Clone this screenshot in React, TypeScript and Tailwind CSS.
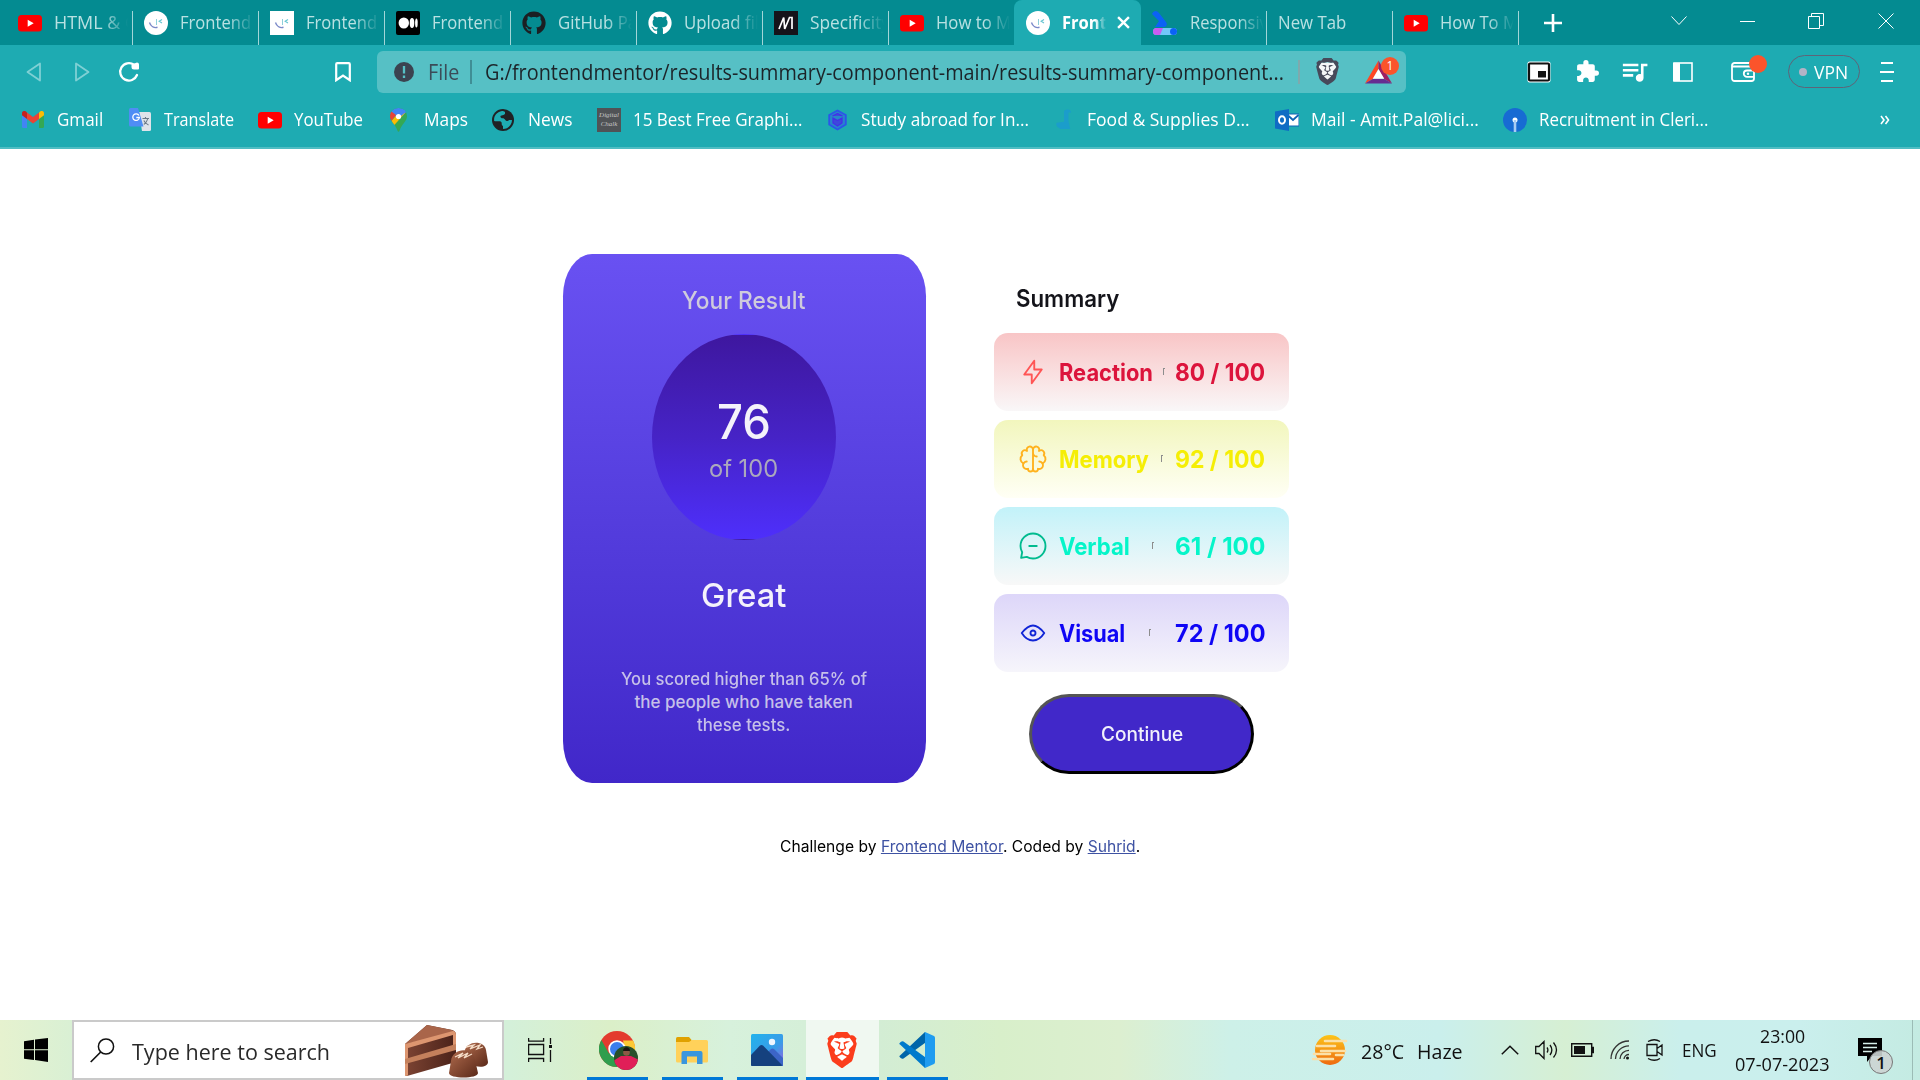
import { useLayoutEffect, useRef, useState, type ReactNode } from "react";
import { FaGithub } from "react-icons/fa";
import { MdExtension, MdQueueMusic } from "react-icons/md";
import { SiBrave } from "react-icons/si";

/* Single-line text condensed or widened to an exact width. */
function Fit({ w, className = "", children }: { w: number; className?: string; children: ReactNode }) {
  const ref = useRef<HTMLSpanElement>(null);
  const [scale, setScale] = useState(1);
  useLayoutEffect(() => {
    if (ref.current && ref.current.offsetWidth) setScale(w / ref.current.offsetWidth);
  }, [w]);
  return (
    <span className={"inline-block shrink-0 whitespace-nowrap " + className} style={{ width: w }}>
      <span ref={ref} className="inline-block origin-left whitespace-nowrap" style={{ transform: `scaleX(${scale})` }}>
        {children}
      </span>
    </span>
  );
}

const YouTube = () => (
  <svg width="24" height="24" viewBox="0 0 24 24" className="shrink-0">
    <rect x="0" y="4" width="24" height="16.5" rx="3.5" fill="#f00" />
    <path d="M9.7 8.8v7l6-3.5z" fill="#fff" />
  </svg>
);

const Mentor = ({ round = false }: { round?: boolean }) => (
  <svg width="24" height="24" viewBox="0 0 24 24" className="shrink-0">
    <rect width="24" height="24" rx={round ? 12 : 0} fill="#fff" />
    <path d="M5.500 11.500c1.200 3.800 4.400 5.700 8 4.800" fill="none" stroke="#7a88c8" strokeWidth="1.400" />
    <path d="M12.500 8v6" stroke="#8fd0da" strokeWidth="1" />
    <path d="M18 8.500 15.200 10.300 18 12" fill="none" stroke="#69c6d2" strokeWidth="1.200" />
  </svg>
);

const Medium = () => (
  <svg width="24" height="24" viewBox="0 0 24 24" className="shrink-0">
    <rect width="24" height="24" rx="2" fill="#000" />
    <ellipse cx="7.800" cy="12" rx="5.200" ry="5.500" fill="#fff" />
    <ellipse cx="16" cy="12" rx="2.300" ry="5" fill="#fff" />
    <ellipse cx="20.400" cy="12" rx="1.300" ry="4.600" fill="#fff" />
  </svg>
);

const Mdn = () => (
  <svg width="24" height="24" viewBox="0 0 24 24" className="shrink-0">
    <rect width="24" height="24" fill="#15141a" />
    <path d="M5 18 9.700 6.500 10.700 18 15.500 6.500h2.500V18" fill="none" stroke="#fff" strokeWidth="1.700" />
  </svg>
);

const Bootcamp = () => (
  <svg width="26" height="24" viewBox="0 0 26 24" className="shrink-0">
    <path d="M0 3C2-1 5-.5 7 2l7 9c2 3 0 5-2 5H3l4-6z" fill="#0b62f6" />
    <rect x="1" y="17" width="24" height="7" rx="3.500" fill="#73c7f9" />
    <path d="M4.500 17H11L8 24H4.500a3.500 3.500 0 0 1 0-7Z" fill="#c95cf0" />
    <circle cx="21.500" cy="20.500" r="3.500" fill="#0b62f6" />
  </svg>
);

type Tab = { icon: ReactNode; title: string; w: number };
const tabsLeft: Tab[] = [
  { icon: <YouTube />, title: "HTML & CSS", w: 102 },
  { icon: <Mentor round />, title: "Frontend M", w: 90 },
  { icon: <Mentor />, title: "Frontend M", w: 90 },
  { icon: <Medium />, title: "Frontend M", w: 90 },
  { icon: <FaGithub size={24} color="#1b1f23" />, title: "GitHub Pages", w: 106 },
  { icon: <FaGithub size={24} color="#fff" />, title: "Upload files", w: 93 },
  { icon: <Mdn />, title: "Specificity", w: 80 },
  { icon: <YouTube />, title: "How to Make", w: 103 },
];

function TabItem({ tab, last = false }: { tab: Tab; last?: boolean }) {
  return (
    <div className="flex h-[45px] w-[126px] shrink-0 items-end">
      <div className={"flex h-[34px] w-full items-start pl-[11px] " + (last ? "" : "border-r border-[#a3d6d8]")}>
        {tab.icon}
        <div className="-mt-px ml-3 w-[74px] overflow-hidden [mask-image:linear-gradient(to_right,#000_65%,transparent)]">
          <Fit w={tab.w} className="text-[19px] leading-6 text-[#b9e1e2]">{tab.title}</Fit>
        </div>
      </div>
    </div>
  );
}

function TabStrip() {
  return (
    <div className="flex h-[45px] bg-[#048b91] pl-[7px]">
      {tabsLeft.map((t, i) => (
        <TabItem key={i} tab={t} last={i === 7} />
      ))}
      <div className="-ml-px flex h-[45px] w-[127px] shrink-0 items-center rounded-t-lg bg-[#1eabb2] pl-3">
        <Mentor round />
        <div className="ml-3 w-[44px] overflow-hidden [mask-image:linear-gradient(to_right,#000_75%,transparent)]">
          <Fit w={76} className="text-[18.5px] font-bold leading-6 text-white">Frontend</Fit>
        </div>
        <svg width="13" height="13" viewBox="0 0 12 12" className="ml-[11px]">
          <path d="m1 1 10 10M11 1 1 11" stroke="#fff" strokeWidth="2.200" />
        </svg>
      </div>
      <TabItem tab={{ icon: <Bootcamp />, title: "Responsive", w: 87 }} />
      <div className="flex h-[45px] w-[126px] shrink-0 items-end">
        <div className="h-[34px] w-full border-r border-[#a3d6d8] pl-[11px]">
          <Fit w={68} className="-mt-px text-[19px] leading-6 text-[#b9e1e2]">New Tab</Fit>
        </div>
      </div>
      <TabItem tab={{ icon: <YouTube />, title: "How To Make", w: 105 }} />
      <div className="flex h-[45px] flex-1 items-center">
        <svg width="18" height="18" viewBox="0 0 18 18" className="ml-[25px]">
          <path d="M9 0v18M0 9h18" stroke="#fff" strokeWidth="2.600" />
        </svg>
        <svg width="16" height="10" viewBox="0 0 16 10" className="mb-[3px] ml-[109px]">
          <path d="m.5.5 7.500 8L15.500.5" fill="none" stroke="#fff" />
        </svg>
        <div className="mb-[3px] ml-[53px] h-px w-[15px] bg-white" />
        <svg width="16" height="16" viewBox="0 0 16 16" className="mb-[3px] ml-[53px]">
          <path d="M.5 3.500h11v12H.5zM3.500 3.500v-3h12v12h-4" fill="none" stroke="#fff" />
        </svg>
        <svg width="16" height="16" viewBox="0 0 16 16" className="mb-[3px] ml-[54px]">
          <path d="m.5.5 15 15M15.500.5l-15 15" stroke="#fff" />
        </svg>
      </div>
    </div>
  );
}

function NavBar() {
  return (
    <div className="flex h-[53px] items-center">
      <svg width="16" height="20" viewBox="0 0 16 20" className="ml-[26px]">
        <path d="M14 1.500v17L1.500 10z" fill="none" stroke="#7fd0d4" strokeWidth="1.800" strokeLinejoin="round" />
      </svg>
      <svg width="16" height="20" viewBox="0 0 16 20" className="ml-[32px]">
        <path d="M2 1.500v17L14.500 10z" fill="none" stroke="#7fd0d4" strokeWidth="1.800" strokeLinejoin="round" />
      </svg>
      <svg width="22" height="22" viewBox="0 0 22 22" className="ml-[28px]">
        <path d="M16 3.800A8.700 8.700 0 1 0 19 14" fill="none" stroke="#fff" strokeWidth="2.300" strokeLinecap="round" />
        <path d="M13.500 3.500 19 1.500a2 2 0 0 1 2 2V7.500a1 1 0 0 1-1 1h-4a2.500 2.500 0 0 1-2.500-2.500z" fill="#fff" />
      </svg>
      <svg width="16" height="20" viewBox="0 0 16 20" className="ml-[195px]">
        <path d="M1.200 2.200q0-1 1-1h11.600q1 0 1 1v16L8 13.500l-6.800 4.700z" fill="none" stroke="#fff" strokeWidth="2.200" />
      </svg>
      <div className="ml-[26px] flex h-[42px] w-[1029px] items-center rounded-md bg-[#56c0c5]">
        <svg width="20" height="20" viewBox="0 0 20 20" className="ml-[17px]">
          <circle cx="10" cy="10" r="10" fill="#3b4350" />
          <path d="M10 4v7.500M10 13.500v2.500" stroke="#56c0c5" strokeWidth="2.300" />
        </svg>
        <Fit w={31} className="ml-[14px] text-[21px] leading-7 text-[#3b4b58]">File</Fit>
        <div className="ml-[11px] h-6 w-[2px] bg-[#3f8e95]" />
        <Fit w={799} className="ml-[13px] text-[21px] leading-7 text-[#1c2429]">G:/frontendmentor/results-summary-component-main/results-summary-component...</Fit>
        <div className="ml-[14px] h-6 w-[2px] bg-[#7fa9ad]" />
        <div className="ml-[16px]"><LionShield w={23} h={27} shell="#47495a" face="#f4f6f8" /></div>
        <div className="relative ml-[26px]">
          <svg width="27" height="24" viewBox="0 0 28 24" className="block">
            <path d="M14 0 0 24l8.500-5L14 9z" fill="#ff4724" />
            <path d="m14 0 14 24-8.500-5L14 9z" fill="#9e1f63" />
            <path d="M0 24h28l-8.500-5h-11z" fill="#662d91" />
            <path d="m14 9 6 10H8z" fill="#fff" />
          </svg>
          <span className="absolute -top-[3px] left-[16px] flex size-[18px] items-center justify-center rounded-full bg-[#fb542b] text-[12px] leading-none text-white">1</span>
        </div>
      </div>
      <svg width="24" height="22" viewBox="0 0 24 22" className="ml-[121px]">
        <rect x=".5" y=".5" width="23" height="21" rx="2" fill="#fff" />
        <rect x="2" y="2.500" width="20" height="17" rx="1" fill="#fff" stroke="#111" strokeWidth="2.200" />
        <rect x="11" y="10" width="8" height="6.500" fill="#111" />
      </svg>
      <MdExtension size={25} color="#fff" className="ml-[24px]" />
      <MdQueueMusic size={31} color="#fff" className="ml-[19px]" />
      <svg width="20" height="20" viewBox="0 0 20 20" className="ml-[23px]">
        <rect x="1" y="1" width="18" height="18" fill="none" stroke="#fff" strokeWidth="1.600" />
        <rect x="0" y="1" width="7" height="18" fill="#fff" />
      </svg>
      <div className="relative ml-[38px]">
        <svg width="24" height="20" viewBox="0 0 24 20" className="block">
          <rect x="1" y="1" width="22" height="18" rx="2.500" fill="none" stroke="#fff" strokeWidth="1.800" />
          <path d="M1 4.500h20M23 8.500h-7a3.200 3.200 0 0 0 0 6.400h7" fill="none" stroke="#fff" strokeWidth="1.800" />
          <circle cx="17" cy="11.700" r="1.200" fill="#fff" />
        </svg>
        <span className="absolute -top-[7px] left-[18px] size-[18px] rounded-full bg-[#fb542b]" />
      </div>
      <div className="ml-[33px] flex h-[33px] w-[72px] items-center rounded-full border-[1.5px] border-[#5e6478] pl-[10px]">
        <span className="size-[8px] rounded-full bg-[#b3b3c6]" />
        <Fit w={34} className="ml-[7px] text-[19px] leading-6 text-white">VPN</Fit>
      </div>
      <svg width="14" height="20" viewBox="0 0 14 20" className="ml-[20px]">
        <path d="M1 1h12M0 10h14M1 19h12" stroke="#fff" strokeWidth="1.900" />
      </svg>
    </div>
  );
}

/* Shield-shaped lion: coloured shell behind the glyph, face showing through its openings. */
function LionShield({ w, h, shell, face }: { w: number; h: number; shell: string; face: string }) {
  return (
    <svg width={w} height={h} viewBox="0 0 30 36" preserveAspectRatio="none" className="shrink-0">
      <path d="M6 6h18l3 7-4 14-8 6-8-6L3 13z" fill={face} />
      <svg x="0" y="0" width="30" height="36" viewBox="1.6 0 20.8 24" preserveAspectRatio="none">
        <SiBrave size={24} color={shell} />
      </svg>
    </svg>
  );
}

const Gmail = () => (
  <svg width="22" height="17" viewBox="0 0 22 17">
    <path d="M0 4v11.500Q0 17 1.500 17H5V7z" fill="#4285f4" />
    <path d="M22 4v11.500q0 1.500-1.500 1.500H17V7z" fill="#34a853" />
    <path d="M17 1.500V8l5-3.700V2.200C22 0 19.500-.7 18 .6z" fill="#fbbc04" />
    <path d="M0 2.200v2.100L5 8V1.500L4 .6C2.500-.7 0 0 0 2.200z" fill="#c5221f" />
    <path d="m5 1.500 6 4.500 6-4.500V8l-6 4.500L5 8z" fill="#ea4335" />
  </svg>
);

const Translate = () => (
  <svg width="22" height="23" viewBox="0 0 22 23">
    <path d="M10 4h10.500q1.500 0 1.500 1.500v16q0 1.500-1.500 1.500H13z" fill="#dfe3ea" />
    <path d="M1.500 0H9l5.500 18.500h-13Q0 18.500 0 17V1.500Q0 0 1.500 0z" fill="#4f8df5" />
    <path d="M10 7.500A3.300 3.300 0 1 0 10.400 9.500H7.300" fill="none" stroke="#fff" strokeWidth="1.300" />
    <path d="M13.500 10.500H20M16.500 9v1.500M18.800 10.500c-.7 3-2.500 5-4 6M14.800 12.500c1 2 2.700 3.500 4.700 4.500" fill="none" stroke="#6c7a89" strokeWidth="1.100" />
  </svg>
);

const MapPin = () => (
  <svg width="17" height="24" viewBox="0 0 17 24">
    <clipPath id="pin">
      <path d="M8.500 0A8.300 8.300 0 0 1 17 8.300c0 5-5.500 8-7.500 14.500q-1 2-2 0C5.500 16.300 0 13.300 0 8.300A8.300 8.300 0 0 1 8.500 0z" />
    </clipPath>
    <g clipPath="url(#pin)">
      <rect width="17" height="24" fill="#34a853" />
      <path d="M0 0h17v3L8.500 12 0 6z" fill="#4285f4" />
      <path d="M0 2.500 6 7 1 13.500-1 12z" fill="#ea4335" />
      <path d="M1 13.500 11 2l4 3-11.500 13z" fill="#fbbc04" />
      <path d="M4 1h9l4 2-6 5-5-1z" fill="#4285f4" />
    </g>
    <circle cx="8.500" cy="8.500" r="2.600" fill="#fff" />
  </svg>
);

const Globe = () => (
  <svg width="22" height="22" viewBox="0 0 22 22">
    <circle cx="11" cy="11" r="11" fill="#202124" />
    <path d="M10 2C4 3 1.500 8 2.200 12c2 1 5-.5 6.500.5 2 1.200 0 3.500 2.300 4.500v3c5 0 9-4 9-9h-3c-1 2-3 1-4-.5-1-2-4-.5-4.500-2.500S11 6.500 13 6V3c-1-1-2-1-3-1z" fill="#1eabb2" />
    <path d="M13.500 4c-.5 2-3.500 2-3.500 4 0 1.300 2.500.5 3.500 2 .8 1 2.500 1 4 .5C18 7 16 4.500 13.500 4zM4 13c1 3 3 5 6 6-.5-2-2-2.500-1.500-4C8 13.500 5.500 14 4 13z" fill="#202124" />
  </svg>
);

const Dark = () => (
  <span className="flex size-6 flex-col items-center justify-center bg-[#505356] font-['Liberation_Serif',serif] text-[7px] italic leading-[9px] text-[#c6c6c6]">
    <span>Digital</span>
    <span>Chalk</span>
  </span>
);

const Hexagon = () => (
  <svg width="19" height="22" viewBox="0 0 19 21">
    <path d="M9.500 1 17.800 5.500v9.500L9.500 20 1.200 15V5.500z" fill="#2785cc" stroke="#2b55ea" strokeWidth="1.800" />
    <path d="M4.500 6.500 9.500 4l5 2.500M5 8.500v5l4.500 3 4.500-3v-5l-4.500 2.500z" fill="#3e48dc" stroke="#4430e8" strokeWidth="1.300" />
  </svg>
);

const Flask = () => (
  <svg width="16" height="24" viewBox="0 0 18 24">
    <path d="M9 2c3-3 8-2 8 2-1-1-2-1-3 0v9l2 9H5C1 20-1 17 1 15l8-1z" fill="#1b9dcb" />
  </svg>
);

const Outlook = () => (
  <svg width="24" height="22" viewBox="0 0 24 22">
    <rect x="12" y="5" width="12" height="12" fill="#fff" stroke="#0f64b5" />
    <path d="m12.500 6 5.500 5 5.500-5" fill="none" stroke="#0f64b5" strokeWidth="1.800" />
    <path d="M0 2.500 14 0v22L0 19.500z" fill="#0f6cc4" />
    <ellipse cx="7" cy="11" rx="3" ry="3.800" fill="none" stroke="#fff" strokeWidth="2" />
  </svg>
);

const Beacon = () => (
  <svg width="24" height="24" viewBox="0 0 24 24">
    <circle cx="12" cy="12" r="12" fill="#176bd3" />
    <circle cx="12" cy="12" r="2.500" fill="#fff" />
    <path d="M12 12v12" stroke="#a9ccf3" strokeWidth="2.600" />
  </svg>
);

/* Box width holds the favicon; the label follows after its own gap. */
const bookmarks: { icon: ReactNode; label: string; w: number; box: string; gap: string }[] = [
  { icon: <Gmail />, label: "Gmail", w: 46, box: "ml-[22px] w-[22px]", gap: "ml-[13px]" },
  { icon: <Translate />, label: "Translate", w: 70, box: "ml-[26px] w-[22px]", gap: "ml-[13px]" },
  { icon: <YouTube />, label: "YouTube", w: 69, box: "ml-[24px] w-[24px]", gap: "ml-[12px]" },
  { icon: <MapPin />, label: "Maps", w: 44, box: "ml-[23px] w-[24px]", gap: "ml-[14px]" },
  { icon: <Globe />, label: "News", w: 44, box: "ml-[24px] w-[22px]", gap: "ml-[14px]" },
  { icon: <Dark />, label: "15 Best Free Graphi...", w: 169, box: "ml-[25px] w-[24px]", gap: "ml-[12px]" },
  { icon: <Hexagon />, label: "Study abroad for In...", w: 168, box: "ml-[23px] w-[24px]", gap: "ml-[12px]" },
  { icon: <Flask />, label: "Food & Supplies D...", w: 163, box: "ml-[23px] w-[24px]", gap: "ml-[11px]" },
  { icon: <Outlook />, label: "Mail - Amit.Pal@lici...", w: 168, box: "ml-[25px] w-[24px]", gap: "ml-[12px]" },
  { icon: <Beacon />, label: "Recruitment in Cleri...", w: 169, box: "ml-[24px] w-[24px]", gap: "ml-[12px]" },
];

function BookmarksBar() {
  return (
    <div className="flex h-[51px] items-center border-b-2 border-[#4fbdc3] pb-[6px]">
      {bookmarks.map((b) => (
        <div key={b.label} className="flex shrink-0 items-center">
          <span className={"flex justify-center " + b.box}>{b.icon}</span>
          <Fit w={b.w} className={"mb-px text-[18.5px] leading-6 text-white " + b.gap}>{b.label}</Fit>
        </div>
      ))}
      <svg width="10" height="10" viewBox="0 0 10 10" className="ml-auto mr-[30px]">
        <path d="m1 1 3 4-3 4M5.500 1l3 4-3 4" fill="none" stroke="#fff" strokeWidth="1.600" />
      </svg>
    </div>
  );
}

const stats = [
  {
    label: "Reaction", w: 94, score: "80 / 100",
    row: "from-[#f8c5c6] to-[#f9f7f8] text-[#dc143c]", tick: "left-[169px]", stroke: "#ff5555",
    d: ["M10.833 8.333V2.500l-6.666 9.167h5V17.500l6.666-9.167h-5Z"],
  },
  {
    label: "Memory", w: 90, score: "92 / 100",
    row: "from-[#f2f6bd] to-[#fffff5] text-[#f5ee05]", tick: "left-[167px]", stroke: "#ffb21e",
    d: [
      "M5.833 11.667a2.500 2.500 0 1 0 .834 4.858",
      "M3.553 13.004a3.333 3.333 0 0 1-.728-5.530m.025-.067a2.083 2.083 0 0 1 2.983-2.824m.199.054A2.083 2.083 0 1 1 10 3.750v12.917a1.667 1.667 0 0 1-3.333 0M10 5.833a2.500 2.500 0 0 0 2.500 2.500m1.667 3.334a2.500 2.500 0 1 1-.834 4.858",
      "M16.447 13.004a3.334 3.334 0 0 0 .728-5.530m-.025-.067a2.083 2.083 0 0 0-2.983-2.824M10 3.750a2.085 2.085 0 0 1 2.538-2.033 2.084 2.084 0 0 1 1.430 2.920m-.635 12.030a1.667 1.667 0 0 1-3.333 0",
    ],
  },
  {
    label: "Verbal", w: 71, score: "61 / 100",
    row: "from-[#c2f2f9] to-[#f8f8f8] text-[#05f5c9]", tick: "left-[158px]", stroke: "#00bb8f",
    d: ["M7.500 10h5M10 18.333A8.333 8.333 0 1 0 1.667 10c0 1.518.406 2.942 1.115 4.167l-.699 3.750 3.750-.699A8.295 8.295 0 0 0 10 18.333Z"],
  },
  {
    label: "Visual", w: 66, score: "72 / 100",
    row: "from-[#ddd6f9] to-[#f6f5fb] text-[#0f05f5]", tick: "left-[155px]", stroke: "#1125d6",
    d: [
      "M10 11.667a1.667 1.667 0 1 0 0-3.334 1.667 1.667 0 0 0 0 3.334Z",
      "M17.500 10c-1.574 2.492-4.402 5-7.500 5s-5.926-2.508-7.500-5C4.416 7.632 6.660 5 10 5s5.584 2.632 7.500 5Z",
    ],
  },
];

function Results() {
  return (
    <main className="h-[871px] bg-white pt-[105px] font-[Inter,sans-serif]">
      <div className="flex h-[529px] gap-[68px] pl-[563px]">
        <section className="flex w-[363px] flex-col items-center rounded-[8%] bg-linear-to-b from-[#6951f2] to-[#4127c9] pr-[2px] pt-[32px]">
          <Fit w={123} className="text-[24px] font-medium leading-[30px] text-[#cfcbdc]">Your Result</Fit>
          <div className="mt-[18px] flex h-[206px] w-[184px] shrink-0 flex-col items-center overflow-hidden rounded-[50%] bg-[linear-gradient(#4e2ffb_1px,#3e179f_1px,#4623c6_50%,#4e2ffb_205px,#3e179f_205px)] pt-[64px]">
            <Fit w={54} className="text-[48px] font-medium leading-[48px] text-[#f4f2fa]">76</Fit>
            <Fit w={69} className="mt-2 text-[24px] leading-[30px] text-[#aba8bd]">of 100</Fit>
          </div>
          <Fit w={85} className="mt-[35px] text-[33px] font-medium leading-[40px] text-[#f4f2fb]">Great</Fit>
          <div className="mt-[53px] flex flex-col items-center text-[17px] font-medium leading-[23px] text-[#c6c0e9]">
            <Fit w={246}>You scored higher than 65% of</Fit>
            <Fit w={218}>the people who have taken</Fit>
            <Fit w={93}>these tests.</Fit>
          </div>
        </section>
        <section className="flex w-[295px] flex-col">
          <h2 className="h-[79px] pl-[22px] pt-[30px] text-[24px] font-semibold leading-[30px] text-[#14141a]">
            <Fit w={103}>Summary</Fit>
          </h2>
          <div className="flex flex-col gap-[9px]">
            {stats.map((s) => (
              <div key={s.label} className={"relative flex h-[78px] items-center rounded-[14px] bg-linear-to-b pl-[24px] pr-[24px] text-[24px] font-bold leading-[30px] " + s.row}>
                <svg width="30" height="30" viewBox="0 0 20 20" fill="none" stroke={s.stroke} strokeWidth="1.250" strokeLinecap="round" strokeLinejoin="round">
                  {s.d.map((d) => <path key={d} d={d} />)}
                </svg>
                <Fit w={s.w} className="ml-[11px] mt-[2px]">{s.label}</Fit>
                <span className={"absolute top-[35px] h-[7px] w-[2px] border-l border-t border-[#8d8d8d] " + s.tick} />
                <Fit w={90} className="ml-auto mt-[2px]">{s.score}</Fit>
              </div>
            ))}
          </div>
          <button className="ml-[35px] mt-[22px] flex h-[80px] w-[225px] shrink-0 items-center justify-center rounded-full border-[3px] border-b-black border-l-[#555] border-r-black border-t-[#555] bg-[#4128c9] text-[19.5px] font-medium text-[#f1f0fb]">
            <Fit w={82} className="mt-[2px]">Continue</Fit>
          </button>
        </section>
      </div>
      <p className="mt-[52px] flex pl-[780px] text-[15.5px] leading-6 text-black">
        <Fit w={360}>
          Challenge by <a className="text-[#3e52a3] underline">Frontend Mentor</a>. Coded by <a className="text-[#3e52a3] underline">Suhrid</a>.
        </Fit>
      </p>
    </main>
  );
}

const Cake = () => (
  <svg width="84" height="53" viewBox="0 0 84 53" className="shrink-0">
    <defs>
      <linearGradient id="cakeSide" x1="0" x2="1"><stop stopColor="#7d4433" /><stop offset="1" stopColor="#4a2219" /></linearGradient>
      <linearGradient id="choc" x1="0" x2="1" y2="1"><stop stopColor="#b06b4d" /><stop offset="1" stopColor="#5a2919" /></linearGradient>
    </defs>
    <path d="M0 19 22 0l25 5q4 1 4 5v27L2 51q-2 0-2-3z" fill="url(#cakeSide)" />
    <path d="M0 19 22 0l25 5q3 1 3 3z" fill="#a9654a" />
    <path d="M0 19 48 6q3 0 3 4v12h-3V10L3 23v27.500L0 51z" fill="#dd9670" />
    <path d="m0 34 51-15v6L0 39z" fill="#c4805c" />
    <path d="M59 28c2-13 20-13 22-3l2 12c0 4-6 6-13 4z" fill="url(#choc)" />
    <path d="M46 36c2-14 22-14 24-1l3 13c0 6-29 6-29 0z" fill="url(#choc)" />
    <path d="m50 32 8-4-5 5 10-5-4 5 8-4M61 22l8-2-4 4 10-4-3 4 6-2" fill="none" stroke="#f5ddc8" strokeWidth="1.300" />
  </svg>
);

const Chrome = () => (
  <svg width="39" height="39" viewBox="0 0 39 39">
    <circle cx="18" cy="18" r="18" fill="#e33b2e" />
    <path d="M2.400 9A18 18 0 0 0 18 36l8-13.500H10z" fill="#2f9e4d" />
    <path d="M34 9.500A18 18 0 0 1 18 36l9-14-3-12.500z" fill="#fcc934" />
    <circle cx="18" cy="18" r="8.700" fill="#fff" />
    <circle cx="18" cy="18" r="7" fill="#3b7ded" />
    <clipPath id="avatar"><circle cx="27" cy="27" r="12" /></clipPath>
    <g clipPath="url(#avatar)">
      <rect x="14" y="14" width="26" height="26" fill="#27502a" />
      <path d="M14 40V30l8-5h10l8 4v11z" fill="#e01f58" />
      <circle cx="27.500" cy="21.500" r="3.300" fill="#8b5a45" />
      <path d="M24 20c0-5 7-5 7 0z" fill="#1b1412" />
    </g>
  </svg>
);

const Explorer = () => (
  <svg width="32" height="27" viewBox="0 0 32 27">
    <path d="M0 1.500Q0 0 1.500 0H13l2.500 3V9H0z" fill="#e0a100" />
    <path d="M0 5h13l3-2h14.500Q32 3 32 4.500V24q0 1.500-1.500 1.500h-29Q0 25.500 0 24z" fill="#ffd15a" />
    <path d="M5.500 27V16q0-2 2-2h17q2 0 2 2v11H21v-7.500H11V27z" fill="#3a96dd" />
  </svg>
);

const Photos = () => (
  <svg width="32" height="32" viewBox="0 0 32 32">
    <defs><linearGradient id="sky" x2="1" y2="1"><stop stopColor="#21b3ec" /><stop offset=".6" stopColor="#3a9be8" /><stop offset="1" stopColor="#9a5fe0" /></linearGradient></defs>
    <rect width="32" height="32" rx="1.500" fill="url(#sky)" />
    <path d="m16 19 4-4q1.500-1 3 0l9 9v8H20z" fill="#3c65c8" />
    <path d="M0 21 9 11.500q1.500-1 3 0L31 31q0 1-1 1H1q-1 0-1-1z" fill="#15417e" />
    <circle cx="21" cy="8" r="3.200" fill="#eef6ff" />
  </svg>
);

const Code = () => (
  <svg width="36" height="36" viewBox="0 0 36 36">
    <path d="M1 23.500 26 0l2 9.500L4.500 26.500Q3 27 2 26.200l-1.300-1.200q-.8-.8.3-1.500z" fill="#0065a9" />
    <path d="M1 12.500 26 36l2-9.500L4.500 9.500Q3 9 2 9.800L.7 11q-.8.800.3 1.500z" fill="#007acc" />
    <path d="M26 0q-.5.500 0 2v32q-.5 1.500 0 2l9-4q1-.5 1-2V6q0-1.500-1-2z" fill="#1f9cf0" />
  </svg>
);

const apps: { icon: ReactNode; cls: string }[] = [
  { icon: <Chrome />, cls: "ml-[35px] w-[61px] pl-[2px]" },
  { icon: <Explorer />, cls: "ml-[14px] w-[61px] pr-[1px] pt-[1px]" },
  { icon: <Photos />, cls: "ml-[14px] w-[61px] pr-[1px]" },
  { icon: <LionShield w={30} h={36} shell="#fb3d1c" face="#ffffff" />, cls: "ml-[8px] w-[73px] bg-[#f0f8f1] pr-[1px]" },
  { icon: <Code />, cls: "ml-[8px] w-[61px] pr-[1px]" },
];

function Taskbar() {
  return (
    <footer className="flex h-[60px] items-center bg-[linear-gradient(to_right,#e6f2cf_0px,#d9f0d4_72px,#d4f0d9_510px,#dbefc8_610px,#d7f1dc_730px,#d3edd4_880px,#d8efca_1000px,#dcefd0_1120px,#cdf0e8_1230px,#caefec_1440px,#d6efd3_1565px,#caefec_1680px,#caefed_1800px,#c4ebe2_1920px)] text-[#111]">
      <svg width="24" height="24" viewBox="0 0 24 24" className="ml-6">
        <path d="M0 3.200 10 1.800v9.500H0zM11 1.600 24 0v11.300H11zM0 12.300h10v9.600L0 20.700zM11 12.300h13V24l-13-1.900z" fill="#000" />
      </svg>
      <div className="ml-6 flex h-[60px] w-[432px] items-center border-2 border-[#cacaca] bg-white">
        <svg width="25" height="25" viewBox="0 0 25 25" className="ml-[16px]">
          <circle cx="16" cy="8.500" r="7.600" fill="none" stroke="#111" strokeWidth="1.500" />
          <path d="M10.700 14 .7 24" stroke="#111" strokeWidth="1.700" />
        </svg>
        <Fit w={198} className="ml-[17px] mt-[3px] text-[22.5px] leading-8 text-[#2a2a2a]">Type here to search</Fit>
        <div className="ml-[75px] mt-[2px]"><Cake /></div>
      </div>
      <svg width="24" height="24" viewBox="0 0 24 24" className="ml-6" fill="none" stroke="#111" strokeWidth="1.300">
        <path d="M.6 0v3.200h15V0M.6 6.500h15v10H.6zM.6 24v-3.500h15V24M22.500 0v6M22.500 12v12" />
        <path d="M21 7h3v3h-3z" fill="#111" stroke="none" />
      </svg>
      {apps.map((a, i) => (
        <div key={i} className={"flex h-[60px] shrink-0 items-center justify-center border-b-[3px] border-[#0078d7] pt-[3px] " + a.cls}>
          {a.icon}
        </div>
      ))}
      <svg width="36" height="32" viewBox="0 0 36 32" className="ml-[364px]">
        <defs><linearGradient id="haze" x2="0" y2="1"><stop stopColor="#fcc419" /><stop offset="1" stopColor="#ee6a10" /></linearGradient></defs>
        <circle cx="18" cy="16" r="15" fill="url(#haze)" />
        <path d="M13 7h21M5 12h18M9 17h24M2 20h16M1 25h20M24 21h7" stroke="#fbe0a8" strokeWidth="2.600" strokeLinecap="round" />
      </svg>
      <Fit w={43} className="ml-[13px] mt-0.5 text-[20.5px] leading-7">28°C</Fit>
      <Fit w={46} className="ml-[13px] mt-0.5 text-[20.5px] leading-7">Haze</Fit>
      <svg width="18" height="10" viewBox="0 0 18 10" className="ml-[38px]"><path d="m.8 9.200 8.200-8 8.200 8" fill="none" stroke="#111" strokeWidth="1.500" /></svg>
      <svg width="23" height="20" viewBox="0 0 23 20" className="ml-[16px]" fill="none" stroke="#111" strokeWidth="1.300">
        <path d="M.7 6.500H4L9 1.500v17l-5-5H.7zM12 7.500q1.800 2.500 0 5M15 5q3.700 5 0 10M18.500 2.500q6 7.500 0 15" />
      </svg>
      <svg width="23" height="14" viewBox="0 0 23 14" className="ml-[13px]">
        <path d="M.7.7h20v12.600H.7zM21.500 4.500h1v5h-1z" fill="none" stroke="#111" strokeWidth="1.400" />
        <path d="M3 3h11v8H3z" fill="#111" />
      </svg>
      <svg width="20" height="20" viewBox="0 0 20 20" className="ml-[16px]" fill="none" stroke="#333" strokeWidth="1.300">
        <path d="M1 19A18 18 0 0 1 19 1M5.500 19A13.500 13.500 0 0 1 19 5.800M10 19a9 9 0 0 1 9-8.700M14 19a5 5 0 0 1 5-4.500" />
        <circle cx="17.500" cy="18" r="1.500" fill="#111" stroke="none" />
      </svg>
      <svg width="17" height="22" viewBox="0 0 17 22" className="ml-[16px]" fill="none" stroke="#111" strokeWidth="1.300">
        <path d="M1 5.500h10v11H1zM11 9.500l5-3.500v10l-5-3.500M2 2.500q6.500-3.500 12 0M2 19.500q6.500 3.500 12 0" />
      </svg>
      <Fit w={35} className="ml-[19px] text-[18.5px] leading-7">ENG</Fit>
      <div className="ml-[17px] flex w-[96px] flex-col items-center text-[18.5px] leading-7">
        <Fit w={45}>23:00</Fit>
        <Fit w={95}>07-07-2023</Fit>
      </div>
      <div className="relative ml-[28px]">
        <svg width="24" height="24" viewBox="0 0 24 24" className="block">
          <path d="M0 0h24v18H14l-5 6v-6H0z" fill="#000" />
          <path d="M5 5.500h14M5 9.500h14M5 13.500h9" stroke="#d8f0ea" strokeWidth="1.300" />
        </svg>
        <span className="absolute left-[11px] top-[12px] flex size-6 items-center justify-center rounded-full border border-[#777] bg-[#ccd4d3]/90 text-[17px] font-semibold leading-none">1</span>
      </div>
      <div className="ml-auto mr-[7px] h-[60px] w-px bg-[#9cbcb6]" />
    </footer>
  );
}

export default function App() {
  return (
    <div className="h-[1080px] w-[1920px] overflow-hidden bg-white font-['Open_Sans',sans-serif]">
      <header className="bg-[#1eabb2]">
        <TabStrip />
        <NavBar />
        <BookmarksBar />
      </header>
      <Results />
      <Taskbar />
    </div>
  );
}
